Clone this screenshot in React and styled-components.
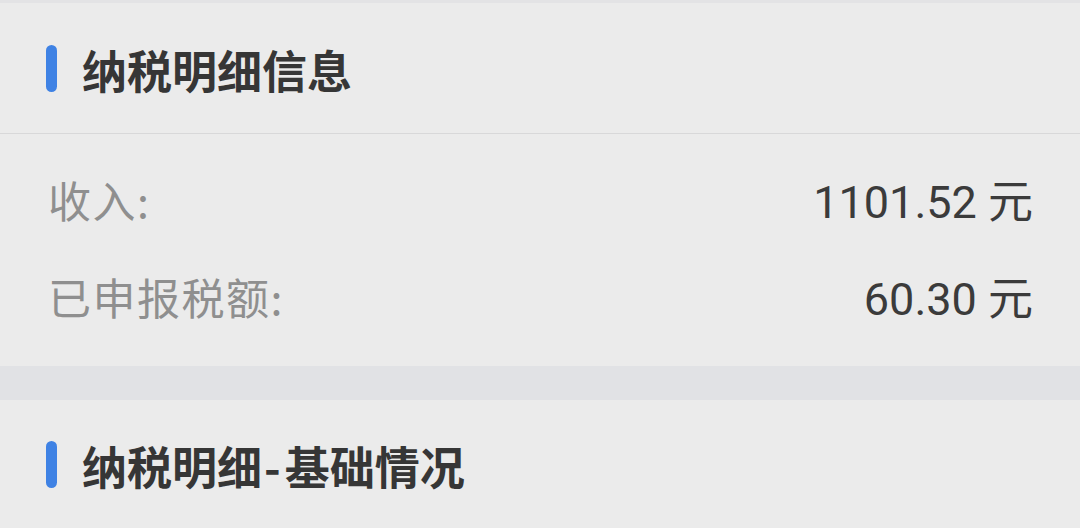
import React from 'react';
import styled, { createGlobalStyle } from 'styled-components';

const GlobalStyle = createGlobalStyle`
  html, body {
    margin: 0;
    padding: 0;
    background: #ebebeb;
  }
  body {
    font-family: "Noto Sans CJK SC", "Noto Sans", sans-serif;
  }
`

const Page = styled.div`
  width: 1080px;
  display: flex;
  flex-direction: column;
  border-top: 3px solid #e3e3e5;
`

const Section = styled.section`
  background-color: #ebebeb;
  display: flex;
  flex-direction: column;
`

const Header = styled.div`
  height: ${props => props.h}px;
  display: flex;
  align-items: center;
  gap: 25px;
  padding: 0 46px;
  border-bottom: ${props => props.divider ? '1.5px solid #d8d8d9' : 'none'};
`

const Marker = styled.span`
  width: 11px;
  height: 47px;
  border-radius: 6px;
  background-color: #3f82e4;
  flex-shrink: 0;
`

const Title = styled.h2`
  margin: 0;
  font-size: 45px;
  font-weight: 700;
  color: #363636;
  line-height: 1;
  transform: translateY(1px);
`

const Dash = styled.span`
  display: inline-block;
  margin: 0 4px 0 2px;
`

const Rows = styled.div`
  display: flex;
  flex-direction: column;
  padding: 16px 48px 22px 48px;
`

const Row = styled.div`
  height: 97px;
  display: flex;
  align-items: center;
  justify-content: space-between;
`

const Label = styled.span`
  font-size: 43px;
  color: #8f8f8f;
  letter-spacing: 1.5px;
`

const Value = styled.span`
  font-family: Roboto, "Noto Sans CJK SC", sans-serif;
  font-size: 45px;
  color: #3b3b3b;
  margin-right: -1px;
`

const Gap = styled.div`
  height: 34px;
  background-color: #e1e2e5;
`

const items = [
  { label: '收入:', value: '1101.52 元' },
  { label: '已申报税额:', value: '60.30 元' },
]

const App = () => {
  return (
    <Page>
      <GlobalStyle />
      <Section>
        <Header h={130} divider>
          <Marker />
          <Title>纳税明细信息</Title>
        </Header>
        <Rows>
          {items.map(item => (
            <Row key={item.label}>
              <Label>{item.label}</Label>
              <Value>{item.value}</Value>
            </Row>
          ))}
        </Rows>
      </Section>
      <Gap />
      <Section>
        <Header h={128}>
          <Marker />
          <Title>纳税明细<Dash>-</Dash>基础情况</Title>
        </Header>
      </Section>
    </Page>
  )
}

export default App
